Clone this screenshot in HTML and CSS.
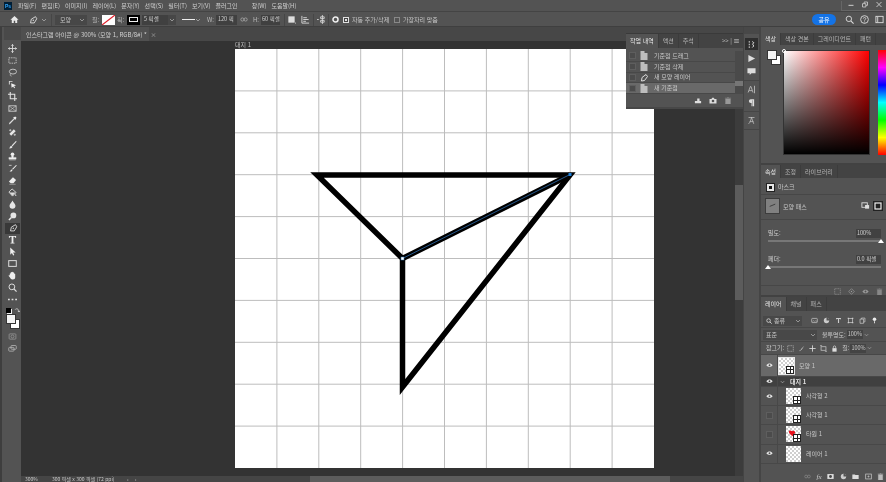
FILE: index.html
```html
<!DOCTYPE html>
<html lang="ko">
<head>
  <meta charset="UTF-8" />
  <title>인스타그램 아이콘 @ 300%</title>
  <link rel="stylesheet" href="styles.css">
</head>
<body>
  <header class="menubar">
    <span class="ps-logo">Ps</span>
    <nav class="menu">
      <span>파일(F)</span><span>편집(E)</span><span>이미지(I)</span><span>레이어(L)</span><span>문자(Y)</span><span>선택(S)</span><span>필터(T)</span><span>보기(V)</span><span>플러그인</span><span class="menu-win">창(W)</span><span>도움말(H)</span>
    </nav>
    <div class="win-controls">
      <svg viewBox="0 0 12 8"><path d="M3 5h6" stroke="#ccc" stroke-width="1.2"/></svg>
      <svg viewBox="0 0 12 8"><path d="M3 3h4v4H3zM5 3V1h4v4H7" fill="none" stroke="#ccc"/></svg>
      <svg viewBox="0 0 12 8"><path d="M3 1l6 6M9 1L3 7" stroke="#ccc" stroke-width="1.1"/></svg>
    </div>
  </header>

  <div class="optionsbar">
    <svg class="opt-home" viewBox="0 0 10 10"><path d="M5 1L.5 5.2H2V9h2.2V6.4h1.6V9H8V5.2h1.5z" fill="#e8e8e8"/></svg>
    <svg class="opt-pen" viewBox="0 0 12 12"><path d="M3 9.5L4 5l5-3 1.5 2.500-3 5z" fill="none" stroke="#ddd" stroke-width="1.100"/><circle cx="6.300" cy="6.300" r=".9" fill="#ddd"/></svg>
    <svg class="chev opt-penchev" viewBox="0 0 6 4"><path d="M1 1l2 2 2-2" fill="none" stroke="#aaa" stroke-width=".8"/></svg>
    <span class="opt-sep"></span>
    <span class="opt-select w-mode">모양<svg class="chev" viewBox="0 0 6 4"><path d="M1 1l2 2 2-2" fill="none" stroke="#aaa" stroke-width=".8"/></svg></span>
    <span class="opt-label m-fill">칠:</span>
    <svg class="opt-swatch" viewBox="0 0 13 10"><rect width="13" height="10" fill="#fff"/><path d="M0 10L13 0" stroke="#e0202c" stroke-width="1.200"/></svg>
    <span class="opt-label m-stroke">획:</span>
    <span class="opt-swatch stroke-swatch"><i></i></span>
    <span class="opt-field w-stroke">5 픽셀</span>
    <span class="opt-select w-arrow"><svg class="chev" viewBox="0 0 6 4"><path d="M1 1l2 2 2-2" fill="none" stroke="#aaa" stroke-width=".8"/></svg></span>
    <span class="opt-select w-line"><i class="line-sample"></i><svg class="chev" viewBox="0 0 6 4"><path d="M1 1l2 2 2-2" fill="none" stroke="#aaa" stroke-width=".8"/></svg></span>
    <span class="opt-label m-w">W:</span>
    <span class="opt-field w-size">120 픽</span>
    <svg class="opt-link" viewBox="0 0 10 6"><circle cx="3" cy="3" r="2" fill="none" stroke="#aaa"/><circle cx="7" cy="3" r="2" fill="none" stroke="#aaa"/></svg>
    <span class="opt-label m-h">H:</span>
    <span class="opt-field w-size2">60 픽셀</span>
    <span class="opt-sep m-sep1"></span>
    <svg class="opt-icon m-i1" viewBox="0 0 10 10"><rect x="1.500" y="1.500" width="7" height="7" fill="#ddd"/><path d="M9 9h1" stroke="#ddd"/></svg>
    <svg class="opt-icon m-i2" viewBox="0 0 10 10"><path d="M1 1v8h8M2.500 3h4M2.500 5h6M2.500 7h3" fill="none" stroke="#ddd"/></svg>
    <span class="opt-sep m-sep2"></span>
    <svg class="opt-icon m-i3" viewBox="0 0 10 10"><path d="M0 5h2M4 2h4v2H4zM4 6h4v2H4zM6 0v10" fill="none" stroke="#ddd" stroke-width=".9"/></svg>
    <span class="opt-sep m-sep3"></span>
    <svg class="opt-icon m-i4" viewBox="0 0 10 10"><circle cx="5" cy="5" r="2.800" fill="none" stroke="#eee" stroke-width="1.700"/></svg>
    <span class="opt-check checked"></span>
    <span class="opt-text m-auto">자동 추가/삭제</span>
    <span class="opt-check m-edge"></span>
    <span class="opt-text m-edgetext">가장자리 맞춤</span>
    <span class="opt-right">
      <button class="share-btn">공유</button>
      <svg class="opt-icon" viewBox="0 0 10 10"><circle cx="4.300" cy="4.300" r="3" fill="none" stroke="#ddd"/><path d="M6.500 6.500L9.500 9.500" stroke="#ddd" stroke-width="1.200"/></svg>
      <svg class="opt-icon" viewBox="0 0 10 10"><circle cx="5" cy="5" r="4.300" fill="none" stroke="#ddd"/><path d="M3.700 4c0-1.700 2.700-1.700 2.700 0C6.400 5 5 5 5 6.300M5 7.200v1" fill="none" stroke="#ddd" stroke-width=".9"/></svg>
      <svg class="opt-icon" viewBox="0 0 10 10"><rect x="1" y="1.500" width="8" height="7" fill="none" stroke="#ddd"/><path d="M3 2v6" stroke="#ddd"/></svg>
    </span>
  </div>

  <div class="workspace">
    <aside class="toolbar">
      <div class="grip"></div>
      <svg viewBox="0 0 10 10"><path d="M5 .5v9M.5 5h9M3.800 1.800L5 .5l1.200 1.300M3.800 8.200L5 9.500l1.200-1.300M1.800 3.800L.5 5l1.300 1.200M8.200 3.800L9.500 5 8.200 6.200" fill="none" stroke="#ddd"/></svg>
      <svg viewBox="0 0 10 10"><rect x="1" y="2" width="8" height="6" fill="none" stroke="#ccc" stroke-dasharray="1.500 1"/></svg>
      <svg viewBox="0 0 10 10"><ellipse cx="5.500" cy="4" rx="4" ry="2.700" fill="none" stroke="#ccc"/><path d="M3 6.500C2 7.500 2.500 9 4 9" fill="none" stroke="#ccc" stroke-width=".8"/></svg>
      <svg viewBox="0 0 10 10"><path d="M1 1h4v1H2v3H1z" fill="#ddd"/><path d="M3.500 3.500l5.500 2.200-2.200 1 1 2-1 .5-1-2L4 8.500z" fill="#eee"/></svg>
      <svg viewBox="0 0 10 10"><path d="M2.500 0v7.500H10M0 2.500h7.500V10" fill="none" stroke="#e4e4e4" stroke-width="1.200"/></svg>
      <svg viewBox="0 0 10 10"><rect x="1" y="2" width="8" height="6" fill="none" stroke="#ccc"/><path d="M1 2l8 6M9 2L1 8" stroke="#ccc" stroke-width=".7"/></svg>
      <svg viewBox="0 0 10 10"><path d="M1 9.500l.5-2L6 3l1 1-4.500 4.500z" fill="#ddd"/><path d="M5.500 2L8 .5l1.500 1.500L8 4.500z" fill="#eee"/></svg>
      <svg viewBox="0 0 10 10"><path d="M1.500 6.500l5-5 2 2-5 5z" fill="#e6e6e6"/><path d="M4 2.500L2.500 1 1 2.500 2.500 4zM7.500 6L9 7.500 7.500 9 6 7.500z" fill="#bbb"/></svg>
      <svg viewBox="0 0 10 10"><path d="M9 .8L4 6l1 1 4.500-5z" fill="#e6e6e6"/><path d="M3.500 6.500c-1.500.5-1 2-2.500 2.800 2 .4 3.700-.2 4-1.800z" fill="#e6e6e6"/></svg>
      <svg viewBox="0 0 10 10"><circle cx="5" cy="2.500" r="2" fill="#eee"/><path d="M4 4h2v2h3v2H1V6h3zM1.500 9h7" fill="#eee" stroke="#eee" stroke-width=".4"/></svg>
      <svg viewBox="0 0 10 10"><path d="M9 1L4.500 5.500l.8.8L9.800 1.800z" fill="#eee"/><path d="M4 6c-1 .2-1 1.800-2.500 2 1.500.8 3 .5 3.500-1z" fill="#eee"/><path d="M1 1.500h3" stroke="#ccc"/></svg>
      <svg viewBox="0 0 10 10"><path d="M5.500 1.500l3.500 3-3 3.500H3L1 6z" fill="#eee"/><path d="M1.500 9.200h7" stroke="#bbb" stroke-width=".7"/></svg>
      <svg viewBox="0 0 10 10"><path d="M4.500 1L1 4.500 5 9l4-4z" fill="none" stroke="#ddd"/><path d="M1.500 5L5 8.500 8.500 5z" fill="#ddd"/><path d="M8.500 6.500l1 2H7.700z" fill="#ddd"/></svg>
      <svg viewBox="0 0 10 10"><path d="M5 .5C6 3 8.300 4.500 8.300 6.500a3.300 3.300 0 01-6.600 0C1.700 4.500 4 3 5 .5z" fill="#e6e6e6"/></svg>
      <svg viewBox="0 0 10 10"><circle cx="6" cy="3.800" r="3.200" fill="#e6e6e6"/><path d="M3.800 6L1 9" stroke="#e6e6e6" stroke-width="1.600"/></svg>
      <span class="tool-active"><svg viewBox="0 0 12 12"><path d="M3 9.500L4 5l5-3 1.500 2.500-3 5z" fill="none" stroke="#ddd" stroke-width="1.100"/><circle cx="6.300" cy="6.300" r=".9" fill="#ddd"/></svg></span>
      <svg viewBox="0 0 10 10"><path d="M1 1h8v2H8L7.500 2H6v6.500h1.200V9.500H2.800V8.500H4V2H2.500L2 3H1z" fill="#eee"/></svg>
      <svg viewBox="0 0 10 10"><path d="M2.500.5l6 5.500H5.700L7 9l-1.300.5L4.400 6.600 2.500 8.500z" fill="#eee"/></svg>
      <svg viewBox="0 0 10 10"><rect x=".8" y="1.800" width="8.400" height="6.400" fill="none" stroke="#ddd" stroke-width="1.100"/></svg>
      <svg viewBox="0 0 10 10"><path d="M2 5V3c0-.8 1-.8 1 0V1.800c0-.8 1.200-.8 1.200 0v-.3c0-.8 1.300-.8 1.300 0V2c0-.8 1.300-.8 1.300 0v1.500c0-.8 1.200-.8 1.200 0V7c0 1.500-1 2.500-2.500 2.500H5C3.500 9.500 3 8.500 2 7L.8 5.500c-.4-.7.600-1.300 1.200-.5z" fill="#eee"/></svg>
      <svg viewBox="0 0 10 10"><circle cx="4.300" cy="4.300" r="3.200" fill="none" stroke="#ddd" stroke-width="1.100"/><path d="M6.700 6.700l2.800 2.800" stroke="#ddd" stroke-width="1.300"/></svg>
      <svg viewBox="0 0 10 10"><path d="M0 5h2M4 5h2M8 5h2" stroke="#ddd" stroke-width="1.500"/></svg>
      <div class="tool-colors">
        <div class="mini-row"><i class="mini-dflt"></i><svg viewBox="0 0 8 8"><path d="M1.500 3.500C3 1.500 6.500 2 6.500 6.500M5 5.200l1.500 1.500L8 5.200" fill="none" stroke="#ddd"/></svg></div>
        <div class="fg-bg tool-fgbg"><i></i><b></b></div>
      </div>
      <svg viewBox="0 0 12 10"><rect x="1.500" y="1.500" width="9" height="7" rx="1" fill="none" stroke="#999"/><circle cx="6" cy="5" r="2" fill="none" stroke="#999"/></svg>
      <svg viewBox="0 0 12 10"><rect x="1" y="3.500" width="7" height="5" rx="1" fill="none" stroke="#bbb"/><rect x="4" y="1" width="7" height="5" rx="1" fill="none" stroke="#bbb"/></svg>
    </aside>

    <main class="document">
      <div class="tabbar">
        <div class="tab">인스타그램 아이콘 @ 300% (모양 1, RGB/8#) * <span class="tab-x">×</span></div>
      </div>
      <div class="canvas-row">
        <div class="canvas-area">
          <div class="artboard-label">대지 1</div>
          <svg class="artboard" viewBox="0 0 419 419">
            <path class="grid" d="M41.900 0v419M83.800 0v419M125.700 0v419M167.600 0v419M209.500 0v419M251.400 0v419M293.300 0v419M335.200 0v419M377.100 0v419M0 41.900h419M0 83.800h419M0 125.700h419M0 167.600h419M0 209.500h419M0 251.400h419M0 293.300h419M0 335.200h419M0 377.100h419"/>
            <path class="shape" d="M82 126L335 126 167.500 338 167.500 209.500 Z"/>
            <path class="shape" d="M167.500 209.500L335 126"/>
            <path class="shape-path" d="M167.500 209.500L335 125.500"/>
            <rect class="anchor" x="166" y="208" width="3" height="3"/>
            <rect class="anchor-end" x="333.500" y="124" width="3" height="3"/>
          </svg>
        </div>
        <div class="vscroll"><i></i></div>
      </div>
      <div class="statusbar">
        <span class="zoom-val">300%</span>
        <span class="doc-size">300 픽셀 x 300 픽셀 (72 ppi)</span>
        <span class="st-arrow">›</span>
        <span class="st-arrow">‹</span>
        <span class="hscroll"><i></i></span>
      </div>

      <section class="history">
        <div class="panel-tabs">
          <span class="ptab on">작업 내역</span><span class="ptab">액션</span><span class="ptab">주석</span>
          <span class="tabs-end">&gt;&gt; | <svg viewBox="0 0 6 5"><path d="M0 .5h6M0 2.500h6M0 4.500h6" stroke="#ccc" stroke-width=".8"/></svg></span>
        </div>
        <div class="history-list">
          <div class="history-rows">
            <div class="hrow"><i class="hbox"></i><svg viewBox="0 0 8 9"><path d="M.5 2h7v7h-7zM.5 0h4v2h-4z" fill="#bdbdbd"/></svg>기준점 드래그</div>
            <div class="hrow"><i class="hbox"></i><svg viewBox="0 0 8 9"><path d="M.5 2h7v7h-7zM.5 0h4v2h-4z" fill="#bdbdbd"/></svg>기준점 삭제</div>
            <div class="hrow"><i class="hbox"></i><svg viewBox="0 0 8 9"><path d="M1.500 8L2 4.500 6 1.500 7.500 3.500 4.500 7.500z" fill="none" stroke="#ddd"/></svg>새 모양 레이어</div>
            <div class="hrow cur"><i class="hbox"></i><svg viewBox="0 0 8 9"><path d="M.5 2h7v7h-7zM.5 0h4v2h-4z" fill="#bdbdbd"/></svg>새 기준점</div>
          </div>
          <div class="history-scroll"><i></i></div>
        </div>
        <div class="history-foot">
          <svg viewBox="0 0 10 9"><path d="M1 8V5h3V2h3v3h2v3z" fill="#ddd"/></svg>
          <svg viewBox="0 0 10 9"><path d="M.5 2.500h2.500l1-1.500h2l1 1.500h2.500v6h-9z" fill="#ddd"/><circle cx="5" cy="5.200" r="1.700" fill="#535353"/></svg>
          <svg viewBox="0 0 10 9"><path d="M2 2.500h6V9H2zM1 1.500h8M4 .5h2" fill="#999" stroke="#999" stroke-width=".7"/></svg>
        </div>
      </section>
    </main>

    <aside class="dock">
      <div class="dock-grip"></div>
      <div class="dock-group">
        <span class="dock-on"><svg viewBox="0 0 10 12"><path d="M2 1.500v2M2 5v2M2 8.500v2M6 2l2 1.500-1.500 2L8 8 6 10" fill="none" stroke="#eee" stroke-width="1.200"/></svg></span>
        <svg viewBox="0 0 10 10"><path d="M1.500 1l7.500 4-7.500 4z" fill="#ddd"/></svg>
        <svg viewBox="0 0 10 10"><path d="M.5 1.500h9v5.500H5L3 9V7H.5z" fill="#ddd"/></svg>
      </div>
      <div class="dock-group">
        <svg viewBox="0 0 10 12"><path d="M.5 10L3.500 2h.8L7 10M1.800 7.500h4" fill="none" stroke="#ccc"/><path d="M9 1v10" stroke="#ccc"/></svg>
        <svg viewBox="0 0 10 12"><path d="M8.500 1.500H4a2.500 2.500 0 000 5h1V11h1.500V3H7v8h1.500z" fill="#ddd"/></svg>
      </div>
      <div class="dock-group">
        <svg viewBox="0 0 10 12"><path d="M1 2h8M5 2C4 6 3 9 1 10.500M5 2l3 8.500M2.500 7.500h5" fill="none" stroke="#ccc" stroke-width=".9"/></svg>
      </div>
    </aside>

    <aside class="panels">
      <section class="panel color-panel">
        <div class="panel-tabs">
          <span class="ptab on">색상</span><span class="ptab">색상 견본</span><span class="ptab">그레이디언트</span><span class="ptab">패턴</span>
        </div>
        <div class="color-body">
          <div class="fg-bg panel-fgbg"><i></i><b></b></div>
          <div class="sat-box"><span class="sat-handle"></span></div>
          <div class="hue-strip"></div>
        </div>
      </section>

      <section class="panel props-panel">
        <div class="panel-tabs">
          <span class="ptab on">속성</span><span class="ptab">조정</span><span class="ptab">라이브러리</span>
        </div>
        <div class="mask-row"><span class="mask-ico"></span>마스크</div>
        <div class="path-row">
          <span class="path-thumb"><svg viewBox="0 0 14 14"><path d="M4 8l6-2.500" stroke="#333" stroke-width=".9"/></svg></span>
          <span class="path-name">모양 패스</span>
          <svg class="prop-ico" viewBox="0 0 10 10"><rect x="1" y="2" width="6" height="5" fill="none" stroke="#ddd"/><rect x="4.500" y="4.500" width="4.500" height="4" fill="#ddd"/></svg>
          <span class="prop-ico-on"><svg viewBox="0 0 10 10"><rect x="2" y="2" width="6" height="6" fill="none" stroke="#eee" stroke-width="1.200"/></svg></span>
        </div>
        <div class="slider-block">
          <div class="slider-head"><span>밀도:</span><span class="val-box">100%</span></div>
          <div class="slider"><i class="thumb end"></i></div>
          <div class="slider-head second"><span>페더:</span><span class="val-box">0.0 픽셀</span></div>
          <div class="slider"><i class="thumb"></i></div>
        </div>
        <div class="props-foot">
          <svg viewBox="0 0 10 10"><rect x="1" y="1" width="8" height="8" fill="none" stroke="#999" stroke-dasharray="1.500 1"/></svg>
          <svg viewBox="0 0 10 10"><path d="M5 1l4 4-4 4-4-4z" fill="none" stroke="#999"/><circle cx="5" cy="5" r="1" fill="#999"/></svg>
          <svg viewBox="0 0 10 10"><path d="M.5 5C3 1.500 7 1.500 9.500 5 7 8.500 3 8.500.5 5z" fill="#999"/><circle cx="5" cy="5" r="1.300" fill="#535353"/></svg>
          <svg viewBox="0 0 10 10"><path d="M2 2.500h6V10H2zM1 1.500h8M4 .5h2" fill="#888" stroke="#888" stroke-width=".7"/></svg>
        </div>
      </section>

      <section class="panel layers-panel">
        <div class="panel-tabs">
          <span class="ptab on">레이어</span><span class="ptab">채널</span><span class="ptab">패스</span>
        </div>
        <div class="layer-filter">
          <span class="lsel w-kind"><span class="kind-label"><svg viewBox="0 0 10 10"><circle cx="4.300" cy="4.300" r="3" fill="none" stroke="#ddd" stroke-width="1.300"/><path d="M6.500 6.500L9.500 9.500" stroke="#ddd" stroke-width="1.400"/></svg>종류</span><svg class="chev" viewBox="0 0 6 4"><path d="M1 1l2 2 2-2" fill="none" stroke="#aaa" stroke-width=".8"/></svg></span>
          <span class="filter-icons">
            <svg viewBox="0 0 10 10"><rect x="1" y="2" width="8" height="6" rx="1" fill="none" stroke="#ccc"/><path d="M2 7l2-2 1.500 1.500L7 5l1.500 2" fill="none" stroke="#ccc" stroke-width=".7"/></svg>
            <svg viewBox="0 0 10 10"><circle cx="5" cy="5" r="3.800" fill="#ccc"/><path d="M5 5V1.200A3.800 3.800 0 018.800 5z" fill="#535353"/></svg>
            <svg viewBox="0 0 10 10"><path d="M1.500 1.500h7v2H8L7.500 3H5.800v5.500h-1.600V3H2.500L2 3.500h-.5z" fill="#ccc"/></svg>
            <svg viewBox="0 0 10 10"><rect x="2" y="2" width="6" height="6" fill="none" stroke="#ccc"/><path d="M1 1h2v2H1zM7 1h2v2H7zM1 7h2v2H1zM7 7h2v2H7z" fill="#ccc"/></svg>
            <svg viewBox="0 0 10 10"><path d="M1.500 3h5v6h-5z" fill="none" stroke="#ccc"/><path d="M3.500 3V1.500h5V7H7" fill="none" stroke="#ccc"/></svg>
            <svg viewBox="0 0 10 10"><circle cx="5" cy="3.200" r="2.500" fill="#eee"/><path d="M5 6v3" stroke="#eee" stroke-width="1.200"/></svg>
          </span>
        </div>
        <div class="layer-blend">
          <span class="lsel w-blend">표준<svg class="chev" viewBox="0 0 6 4"><path d="M1 1l2 2 2-2" fill="none" stroke="#aaa" stroke-width=".8"/></svg></span>
          <span class="llabel">불투명도:</span>
          <span class="lval">100%</span>
          <span class="lchev"><svg class="chev" viewBox="0 0 6 4"><path d="M1 1l2 2 2-2" fill="none" stroke="#aaa" stroke-width=".8"/></svg></span>
        </div>
        <div class="layer-lock">
          <span class="llabel">잠그기:</span>
          <span class="lock-icons">
            <svg viewBox="0 0 10 10"><rect x="1" y="1" width="8" height="8" fill="none" stroke="#bbb" stroke-dasharray="1.500 1"/></svg>
            <svg viewBox="0 0 10 10"><path d="M9 1L4 6l1 1zM3.500 6.500L1.500 9l2.500-1z" fill="#ccc"/></svg>
            <svg viewBox="0 0 10 10"><path d="M5 .5v9M.5 5h9" stroke="#ddd" stroke-width="1.200"/></svg>
            <svg viewBox="0 0 10 10"><rect x="1.500" y="2.500" width="7" height="5" fill="none" stroke="#ccc"/><path d="M0 1h3M7 9h3" stroke="#ccc"/></svg>
            <svg viewBox="0 0 10 10"><rect x="2" y="4.500" width="6" height="5" fill="#ddd"/><path d="M3.300 4.500V3a1.700 1.700 0 013.400 0v1.500" fill="none" stroke="#ddd"/></svg>
          </span>
          <span class="llabel fill-label">칠:</span>
          <span class="lval">100%</span>
          <span class="lchev"><svg class="chev" viewBox="0 0 6 4"><path d="M1 1l2 2 2-2" fill="none" stroke="#aaa" stroke-width=".8"/></svg></span>
        </div>

        <div class="layer-list">
          <div class="lrow selected">
            <span class="eye-cell"><svg class="eye" viewBox="0 0 10 6"><path d="M.5 3C3 -.2 7 -.2 9.500 3 7 6.200 3 6.200.5 3z" fill="#e8e8e8"/><circle cx="5" cy="3" r="1.300" fill="#535353"/></svg></span>
            <span class="thumb-box checker picked"><i class="artmark"></i></span>
            <span class="lname">모양 1</span>
          </div>
          <div class="lrow group">
            <span class="eye-cell"><svg class="eye" viewBox="0 0 10 6"><path d="M.5 3C3 -.2 7 -.2 9.500 3 7 6.200 3 6.200.5 3z" fill="#e8e8e8"/><circle cx="5" cy="3" r="1.300" fill="#404040"/></svg></span>
            <svg class="chev group-chev" viewBox="0 0 6 4"><path d="M1 1l2 2 2-2" fill="none" stroke="#bbb" stroke-width=".8"/></svg>
            <span class="lname">대지 1</span>
          </div>
          <div class="lrow child">
            <span class="eye-cell"><svg class="eye" viewBox="0 0 10 6"><path d="M.5 3C3 -.2 7 -.2 9.500 3 7 6.200 3 6.200.5 3z" fill="#e8e8e8"/><circle cx="5" cy="3" r="1.300" fill="#535353"/></svg></span>
            <span class="thumb-box checker"><i class="artmark"></i></span>
            <span class="lname">사각형 2</span>
          </div>
          <div class="lrow child">
            <span class="eye-cell"><i class="hbox"></i></span>
            <span class="thumb-box checker"><i class="artmark"></i></span>
            <span class="lname">사각형 1</span>
          </div>
          <div class="lrow child">
            <span class="eye-cell"><i class="hbox"></i></span>
            <span class="thumb-box checker"><svg class="heart" viewBox="0 0 10 9"><path d="M1 2.500C1 .5 3.500 0 5 1.500 6 .5 9 .5 9 3 9 5 7 6.500 5.500 8 4 6 1 5 1 2.500z" fill="#e8101c"/></svg><i class="artmark"></i></span>
            <span class="lname">타원 1</span>
          </div>
          <div class="lrow child">
            <span class="eye-cell"><svg class="eye" viewBox="0 0 10 6"><path d="M.5 3C3 -.2 7 -.2 9.500 3 7 6.200 3 6.200.5 3z" fill="#e8e8e8"/><circle cx="5" cy="3" r="1.300" fill="#535353"/></svg></span>
            <span class="thumb-box checker"></span>
            <span class="lname">레이어 1</span>
          </div>
        </div>

        <div class="layers-foot">
          <svg viewBox="0 0 10 6"><circle cx="3" cy="3" r="2" fill="none" stroke="#888"/><circle cx="7" cy="3" r="2" fill="none" stroke="#888"/></svg>
          <span class="fx">fx</span>
          <svg viewBox="0 0 10 9"><rect x=".5" y="1" width="9" height="7" fill="#ddd"/><circle cx="5" cy="4.500" r="2" fill="#444"/></svg>
          <svg viewBox="0 0 10 10"><circle cx="5" cy="5" r="3.800" fill="#ccc"/><path d="M5 5V1.200A3.800 3.800 0 018.800 5z" fill="#535353"/></svg>
          <svg viewBox="0 0 10 9"><path d="M.5 1.500h3.500l1 1h4.500V8H.5z" fill="#ddd"/></svg>
          <svg viewBox="0 0 10 9"><rect x="1" y="1" width="8" height="7" fill="none" stroke="#ccc"/><path d="M5 3v3M3.500 4.500h3" stroke="#ccc" stroke-width=".8"/></svg>
          <svg viewBox="0 0 10 10"><path d="M2 2.500h6V10H2zM1 1.500h8M4 .5h2" fill="#bbb" stroke="#bbb" stroke-width=".7"/></svg>
        </div>
      </section>
    </aside>
  </div>
</body>
</html>
```

FILE: styles.css
```css
* {
  box-sizing: border-box;
}

html, body {
  height: 100%;
}

body {
  margin: 0;
  width: 886px;
  height: 482px;
  overflow: hidden;
  display: flex;
  flex-direction: column;
  background: #535353;
  color: #c8c8c8;
  font-family: "Noto Sans CJK KR", "Noto Sans", sans-serif;
  font-size: 6px;
  line-height: 1;
  filter: blur(.3px);
}

svg {
  display: block;
}

.chev {
  width: 6px;
  height: 4px;
  flex: none;
}

/* top menu */
.menubar {
  height: 11px;
  flex: none;
  display: flex;
  align-items: center;
  padding-left: 4px;
  background: #535353;
}

.ps-logo {
  width: 8px;
  height: 8px;
  background: #001e36;
  color: #31a8ff;
  font: bold 5px/8px "Liberation Sans", sans-serif;
  text-align: center;
}

.menu {
  display: flex;
  gap: 5px;
  margin-left: 6px;
  color: #d0d0d0;
}

.menu-win {
  margin-left: 9px;
}

.win-controls {
  margin-left: auto;
  display: flex;
  gap: 4px;
  padding: 0 2px 2px 4px;
  border-left: 1px solid #666;
  border-bottom: 1px solid #666;
}

.win-controls svg {
  width: 10px;
  height: 7px;
}

/* options bar */
.optionsbar {
  height: 16px;
  flex: none;
  display: flex;
  align-items: center;
  padding: 1px 0 0 10px;
  background: #535353;
  border-top: 1px solid #444;
  border-bottom: 1px solid #3f3f3f;
}

.optionsbar > * {
  flex: none;
}

.opt-home {
  width: 9px;
  height: 9px;
}

.opt-pen {
  width: 10px;
  height: 10px;
  margin-left: 9px;
}

.opt-penchev {
  margin-left: 3px;
}

.opt-sep {
  width: 1px;
  height: 12px;
  background: #464646;
  margin-left: 4px;
}

.opt-select {
  height: 10px;
  display: flex;
  align-items: center;
  justify-content: space-between;
  background: #474747;
  padding: 0 2px 0 5px;
}

.w-mode {
  width: 32px;
  margin-left: 3px;
}

.w-arrow {
  width: 8px;
  padding: 0 1px;
}

.w-line {
  width: 21px;
  margin-left: 5px;
  padding: 0 1px;
  background: none;
}

.line-sample {
  width: 13px;
  height: 1px;
  background: #eee;
}

.opt-label {
  width: 7px;
  color: #bdbdbd;
  white-space: nowrap;
}

.m-fill {
  margin-left: 5px;
}

.opt-swatch {
  width: 13px;
  height: 10px;
  margin-left: 3px;
}

.m-stroke {
  margin-left: 2px;
}

.stroke-swatch {
  background: #000;
  display: flex;
  align-items: center;
  justify-content: center;
}

.stroke-swatch i {
  width: 9px;
  height: 5px;
  border: 1px solid #eee;
}

.opt-field {
  height: 10px;
  display: flex;
  align-items: center;
  background: #404040;
  padding-left: 2px;
  color: #d0d0d0;
  white-space: nowrap;
  font-size: 5.500px;
}

.w-stroke {
  width: 26px;
  margin-left: 2px;
}

.m-w {
  margin-left: 5px;
}

.w-size {
  width: 21px;
  margin-left: 2px;
}

.opt-link {
  width: 8px;
  height: 5px;
  margin-left: 3px;
}

.m-h {
  margin-left: 5px;
}

.w-size2 {
  width: 19px;
  margin-left: 1px;
  padding-left: 1px;
}

.opt-icon {
  width: 9px;
  height: 9px;
}

.m-sep1 {
  margin-left: 4px;
}

.m-i1 {
  margin-left: 2px;
}

.m-i2 {
  margin-left: 5px;
}

.m-sep2 {
  margin-left: 3px;
}

.m-i3 {
  margin-left: 3px;
}

.m-sep3 {
  margin-left: 2px;
}

.m-i4 {
  margin-left: 2px;
}

.opt-check {
  width: 6px;
  height: 6px;
  margin-left: 3px;
  border: 1px solid #888;
}

.opt-check.checked {
  background: #e0e0e0;
  border: 1.5px solid #e0e0e0;
  box-shadow: inset 0 0 0 1px #444;
}

.opt-text {
  white-space: nowrap;
}

.m-auto {
  width: 38px;
  margin-left: 3px;
}

.m-edge {
  margin-left: 4px;
}

.m-edgetext {
  margin-left: 3px;
}

.opt-right {
  margin-left: auto;
  display: flex;
  align-items: center;
  gap: 6px;
  padding-right: 2px;
}

.share-btn {
  width: 24px;
  height: 11px;
  padding: 0;
  margin-right: 3px;
  border: none;
  border-radius: 6px;
  background: #1473e6;
  color: #fff;
  font: inherit;
}

/* main area */
.workspace {
  flex: 1;
  min-height: 0;
  display: flex;
  background: #454545;
}

.toolbar {
  width: 21px;
  flex: none;
  display: flex;
  flex-direction: column;
  align-items: center;
  gap: 2.95px;
  padding: 0 0 0 2px;
  background: #535353;
  border-left: 2px solid #3e3e3e;
}

.toolbar > svg {
  width: 9px;
  height: 9px;
  flex: none;
}

.grip {
  width: 100%;
  height: 13px;
  flex: none;
  background: #494949;
  margin-bottom: 1.500px;
}

.tool-active {
  width: 15px;
  height: 11px;
  margin: -1px 0;
  flex: none;
  display: flex;
  align-items: center;
  justify-content: center;
  background: #383838;
}

.tool-active svg {
  width: 10px;
  height: 10px;
}

.tool-colors {
  width: 16px;
  flex: none;
}

.mini-row {
  display: flex;
  align-items: center;
  justify-content: space-between;
  padding: 0 1px;
}

.mini-row svg {
  width: 6px;
  height: 6px;
}

.mini-dflt {
  width: 5px;
  height: 5px;
  background: #000;
  box-shadow: 1px 1px 0 #eee;
}

.fg-bg {
  position: relative;
}

.fg-bg i, .fg-bg b {
  position: absolute;
  display: block;
  background: #fff;
  border: 1px solid #353535;
}

.fg-bg i {
  z-index: 1;
  background: #f4f4f4;
}

.tool-fgbg {
  height: 15px;
  margin-top: 1px;
  margin-left: 1px;
}

.tool-fgbg i {
  left: 0;
  top: 0;
  width: 10px;
  height: 10px;
}

.tool-fgbg b {
  left: 4px;
  top: 5px;
  width: 10px;
  height: 10px;
}

.document {
  position: relative;
  width: 722px;
  flex: none;
  display: flex;
  flex-direction: column;
  background: #333;
}

.tabbar {
  height: 14px;
  flex: none;
  display: flex;
  background: #474747;
}

.tab {
  width: 128px;
  padding: 5px 0 0 5px;
  background: #505050;
  white-space: nowrap;
  color: #d2d2d2;
}

.tab-x {
  margin-left: 2px;
  color: #aaa;
}

.canvas-row {
  flex: 1;
  min-height: 0;
  display: flex;
}

.canvas-area {
  flex: 1;
  padding: 1px 0 0 214px;
  overflow: hidden;
}

.artboard-label {
  height: 7px;
  color: #bbb;
}

.artboard {
  width: 419px;
  height: 419px;
  background: #fff;
}

.grid {
  stroke: #bdbdbd;
  stroke-width: 1;
  fill: none;
}

.shape {
  fill: none;
  stroke: #000;
  stroke-width: 5.500;
  stroke-linejoin: miter;
}

.shape-path {
  stroke: #2f6fb0;
  stroke-width: .8;
  fill: none;
}

.anchor {
  fill: #fff;
  stroke: #2b6ea8;
  stroke-width: .5;
}

.anchor-end {
  fill: #1c7fd8;
}

.vscroll {
  width: 8px;
  flex: none;
  padding-top: 144px;
  background: #3c3c3c;
}

.vscroll i {
  display: block;
  height: 115px;
  background: #5c5c5c;
}

.statusbar {
  height: 6px;
  flex: none;
  display: flex;
  background: #454545;
  color: #c8c8c8;
  font-size: 5px;
}

.zoom-val {
  margin-left: 4px;
  width: 27px;
}

.doc-size {
  width: 75px;
  white-space: nowrap;
}

.st-arrow {
  width: 8px;
}

.hscroll {
  flex: 1;
  padding-left: 167px;
}

.hscroll i {
  display: block;
  width: 360px;
  height: 6px;
  background: #5c5c5c;
}

/* panels */
.panel-tabs {
  height: 13px;
  flex: none;
  display: flex;
  align-items: stretch;
  background: #434343;
}

.ptab {
  display: flex;
  align-items: center;
  padding: 0 4px;
  color: #b5b5b5;
  border-right: 1px solid #3c3c3c;
  white-space: nowrap;
}

.ptab.on {
  background: #535353;
  color: #e6e6e6;
}

.tabs-end {
  margin-left: auto;
  display: flex;
  align-items: center;
  gap: 2px;
  padding-right: 4px;
  color: #bbb;
}

.tabs-end svg {
  width: 5px;
  height: 4px;
}

.history {
  position: absolute;
  left: 605px;
  top: 6px;
  width: 117px;
  height: 76px;
  display: flex;
  flex-direction: column;
  background: #535353;
  border-top: 1px solid #3a3a3a;
  border-bottom: 2px solid #474747;
}

.history .panel-tabs {
  height: 14px;
}

.history-list {
  display: flex;
  padding-top: 3px;
}

.history-rows {
  flex: 1;
}

.hrow {
  height: 10.800px;
  display: flex;
  align-items: center;
  border-bottom: 1px solid #484848;
  color: #c8c8c8;
}

.hrow.cur {
  background: #696969;
}

.hrow svg {
  width: 8px;
  height: 9px;
  margin: 0 6px 0 4px;
}

.hbox {
  display: block;
  width: 7px;
  height: 7px;
  margin-left: 3px;
  border: 1px solid #5e5e5e;
  background: #4b4b4b;
}

.history-scroll {
  width: 8px;
  flex: none;
  padding-top: 30px;
  background: #4a4a4a;
}

.history-scroll i {
  display: block;
  height: 5px;
  background: #767676;
}

.history-foot {
  display: flex;
  justify-content: flex-end;
  align-items: center;
  gap: 7px;
  flex: 1;
  padding-right: 11px;
}

.history-foot svg {
  width: 8px;
  height: 7px;
}

.dock {
  width: 18px;
  flex: none;
  background: #535353;
  border-left: 1px solid #444;
  border-right: 2px solid #454545;
}

.dock-grip {
  height: 7px;
  background: #484848;
}

.dock-group {
  display: flex;
  flex-direction: column;
  align-items: center;
  gap: 4px;
  padding: 4px 0;
  border-bottom: 1px solid #464646;
}

.dock-group svg {
  width: 9px;
  height: 9px;
}

.dock-on {
  width: 13px;
  height: 12px;
  display: flex;
  align-items: center;
  justify-content: center;
  background: #2e2e2e;
}

.panels {
  flex: 1;
  display: flex;
  flex-direction: column;
  gap: 2px;
  background: #424242;
}

.panel {
  display: flex;
  flex-direction: column;
  background: #535353;
}

.color-panel {
  height: 136px;
  padding-top: 6px;
}

.color-panel .panel-tabs {
  height: 12px;
}

.color-body {
  flex: 1;
  display: flex;
  padding: 5px 0 8px 6px;
}

.panel-fgbg {
  width: 16px;
  height: 17px;
  flex: none;
}

.panel-fgbg i {
  left: 0;
  top: 0;
  width: 10px;
  height: 10px;
}

.panel-fgbg b {
  left: 4px;
  top: 5px;
  width: 10px;
  height: 10px;
}

.sat-box {
  position: relative;
  width: 87px;
  height: 105px;
  background: linear-gradient(to bottom, transparent, #000), linear-gradient(to right, #fff, #f00);
  border: 1px solid #333;
}

.sat-handle {
  position: absolute;
  left: -2px;
  top: -2px;
  width: 4px;
  height: 4px;
  border: 1px solid #fff;
  border-radius: 50%;
}

.hue-strip {
  width: 8px;
  height: 105px;
  margin-left: 8px;
  background: linear-gradient(to bottom, #f00, #f0f, #00f, #0ff, #0f0, #ff0, #f00);
}

.props-panel {
  height: 130px;
}

.mask-row {
  height: 17px;
  display: flex;
  align-items: center;
  gap: 3px;
  padding: 2px 0 0 5px;
  border-bottom: 1px solid #474747;
}

.mask-ico {
  width: 9px;
  height: 9px;
  background: radial-gradient(circle, #111 30%, #e6e6e6 35%);
  border: 1px solid #222;
}

.path-row {
  height: 25px;
  display: flex;
  align-items: flex-start;
  padding: 3px 3px 0 4px;
  border-bottom: 1px solid #474747;
}

.path-row .path-name {
  align-self: center;
}

.path-row .prop-ico, .path-row .prop-ico-on {
  margin-top: 3px;
}

.path-thumb {
  width: 15px;
  height: 16px;
  background: #808080;
  border: 1px solid #3d3d3d;
}

.path-name {
  flex: 1;
  margin-left: 3px;
  padding-bottom: 3px;
}

.prop-ico {
  width: 9px;
  height: 9px;
}

.prop-ico-on {
  width: 10px;
  height: 10px;
  margin-left: 3px;
  background: #222;
}

.slider-block {
  height: 65px;
  padding: 8px 5px 0 7px;
}

.slider-head {
  display: flex;
  align-items: center;
  justify-content: space-between;
  height: 10px;
  color: #d0d0d0;
}

.slider-head.second {
  margin-top: 12px;
}

.val-box {
  width: 25px;
  height: 9px;
  padding-left: 1px;
  line-height: 9px;
  background: #414141;
  font-size: 5.500px;
}

.slider {
  position: relative;
  height: 2px;
  margin-top: 2px;
  background: #777;
}

.thumb {
  position: absolute;
  left: -3px;
  top: -1px;
  border-left: 3px solid transparent;
  border-right: 3px solid transparent;
  border-bottom: 4px solid #fff;
}

.thumb.end {
  left: auto;
  right: -3px;
}

.props-foot {
  flex: 1;
  display: flex;
  justify-content: flex-end;
  align-items: center;
  gap: 7px;
  padding: 2px 3px 0 0;
  border-top: 1px solid #474747;
}

.props-foot svg {
  width: 7px;
  height: 7px;
}

.layers-panel {
  flex: 1;
  min-height: 0;
}

.layers-panel .panel-tabs {
  height: 14px;
}

.layer-filter, .layer-blend, .layer-lock {
  height: 14px;
  flex: none;
  display: flex;
  align-items: center;
  padding-left: 2px;
  border-bottom: 1px solid #474747;
}

.layer-filter {
  margin-top: 3px;
}

.layer-lock {
  height: 13px;
}

.lsel {
  height: 10px;
  display: flex;
  align-items: center;
  justify-content: space-between;
  padding: 0 1px 0 3px;
  background: #484848;
}

.kind-label {
  display: flex;
  align-items: center;
  gap: 2px;
}

.kind-label svg {
  width: 6px;
  height: 6px;
}

.w-kind {
  width: 39px;
}

.w-blend {
  width: 54px;
}

.filter-icons {
  display: flex;
  gap: 5px;
  margin-left: 9px;
}

.filter-icons svg {
  width: 7px;
  height: 7px;
}

.llabel {
  margin-left: 5px;
  white-space: nowrap;
}

.layer-lock .llabel:first-child {
  margin-left: 3px;
}

.layer-lock .fill-label {
  margin-left: 4px;
}

.lval {
  width: 16px;
  height: 9px;
  margin-left: 1px;
  line-height: 9px;
  padding-left: 1px;
  background: #444;
  font-size: 5.500px;
}

.lchev {
  width: 6px;
  height: 9px;
  margin-left: 1px;
  display: flex;
  align-items: center;
}

.lchev svg {
  width: 5px;
}

.lock-icons {
  display: flex;
  gap: 4px;
  margin-left: 3px;
}

.lock-icons svg {
  width: 7px;
  height: 7px;
}

.layer-list {
  flex: none;
}

.lrow {
  height: 19.200px;
  display: flex;
  align-items: center;
  border-bottom: 1px solid #484848;
}

.lrow.selected {
  height: 22px;
  background: #696969;
}

.lrow.group {
  height: 10px;
  background: #404040;
  font-weight: bold;
  color: #e0e0e0;
}

.eye-cell {
  width: 17px;
  height: 100%;
  flex: none;
  display: flex;
  align-items: center;
  justify-content: center;
  border-right: 1px solid #484848;
}

.eye-cell .hbox {
  margin: 0;
}

.eye {
  width: 7px;
  height: 4.500px;
}

.group-chev {
  margin-left: 2px;
  width: 5px;
}

.thumb-box {
  position: relative;
  width: 15px;
  height: 16px;
  flex: none;
  margin-left: 1px;
}

.child .thumb-box {
  margin-left: 8px;
}

.checker {
  background: repeating-conic-gradient(#cfcfcf 0 25%, #fff 0 50%) 0 0 / 4px 4px;
}

.picked {
  outline: 1px solid #e6e6e6;
}

.artmark {
  position: absolute;
  right: 0;
  bottom: 0;
  width: 8px;
  height: 8px;
  border: 1px solid #222;
  background:
    linear-gradient(#222, #222) 50% 0 / 1px 100% no-repeat,
    linear-gradient(#222, #222) 0 50% / 100% 1px no-repeat,
    #fff;
}

.heart {
  position: absolute;
  left: 2px;
  top: 4px;
  width: 8px;
  height: 7px;
}

.lname {
  margin-left: 5px;
  white-space: nowrap;
}

.layers-foot {
  flex: 1;
  display: flex;
  justify-content: flex-end;
  align-items: center;
  gap: 5.500px;
  padding: 8px 2px 0 0;
}

.layers-foot svg {
  width: 7px;
  height: 7px;
}

.fx {
  font: italic 7px "Liberation Serif", serif;
  color: #ccc;
}
```
